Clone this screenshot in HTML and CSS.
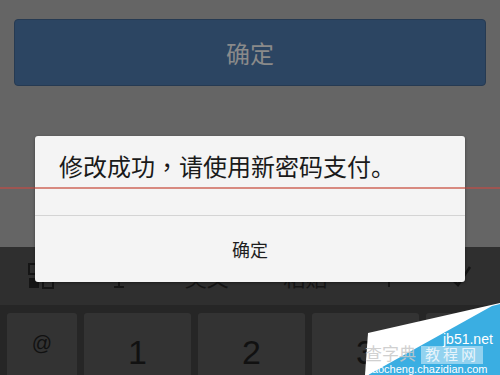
FILE: index.html
```html
<!DOCTYPE html>
<html lang="zh-CN">
<head>
<meta charset="utf-8">
<link rel="stylesheet" href="styles.css">
</head>
<body>
<div class="screen">
  <div class="top">
    <div class="primary-btn">确定</div>
  </div>
  <div class="toolbar">
    <span class="tool">
      <svg width="26" height="26" viewBox="0 0 26 26"><rect x="1" y="1" width="10" height="10" fill="none" stroke="#151515" stroke-width="2"/><rect x="1" y="15" width="10" height="10" fill="#151515"/><rect x="15" y="15" width="10" height="10" fill="none" stroke="#151515" stroke-width="2"/></svg>
    </span>
    <span class="tool">
      <svg width="22" height="26" viewBox="0 0 22 26"><path d="M2 4h18M11 4v20M6 24h10" stroke="#151515" stroke-width="2" fill="none"/></svg>
    </span>
    <span class="tool tool-text">英文</span>
    <span class="tool tool-text">粘贴</span>
    <span class="tool">
      <svg width="14" height="26" viewBox="0 0 14 26"><path d="M7 2v22M2 8l5-6 5 6" stroke="#151515" stroke-width="2" fill="none"/></svg>
    </span>
    <span class="tool">
      <svg width="22" height="26" viewBox="0 0 22 26"><path d="M2 16l6 6L20 4" stroke="#151515" stroke-width="2.5" fill="none"/></svg>
    </span>
  </div>
  <div class="keys">
    <div class="key key-small">@</div>
    <div class="key">1</div>
    <div class="key">2</div>
    <div class="key">3</div>
    <div class="key"></div>
  </div>

  <div class="red-line"></div>

  <div class="dialog">
    <div class="dialog-msg">修改成功<span class="punct" lang="zh-TW">，</span>请使用新密码支付。</div>
    <div class="dialog-line"></div>
    <div class="dialog-btn">确定</div>
  </div>

  <svg class="watermark" width="145" height="75" viewBox="0 0 145 75">
    <polygon points="13,33 145,3 145,75 10,75" fill="#ffffff"/>
    <polygon points="137,6 145,4 145,75 13,75" fill="#3aaee2"/>
    <text x="88" y="44" fill="#ffffff" font-family="Liberation Sans, sans-serif" font-size="14">jb51.net</text>
    <text x="10" y="60" fill="#c8c8c8" font-family="Noto Sans CJK SC, sans-serif" font-size="17" opacity="0.85">查字典</text>
    <rect x="66" y="46" width="62" height="18" fill="#ffffff" opacity="0.45"/>
    <text x="70" y="60" fill="#e8f4fb" font-family="Noto Sans CJK SC, sans-serif" font-size="15" letter-spacing="3">教程网</text>
    <text x="12" y="73" fill="#ffffff" font-family="Liberation Sans, sans-serif" font-size="11">jiaocheng.chazidian.com</text>
  </svg>
</div>
</body>
</html>
```
FILE: styles.css
```css
* { box-sizing: border-box; }
html, body { margin: 0; padding: 0; }
body {
  width: 500px;
  height: 375px;
  overflow: hidden;
  background: #656565;
  font-family: "Noto Sans CJK SC", "Liberation Sans", sans-serif;
}
.screen {
  position: relative;
  width: 500px;
  height: 375px;
  overflow: hidden;
}
.top {
  height: 247px;
  padding: 19px 14px 0 14px;
  background: #656565;
}
.primary-btn {
  height: 67px;
  border-radius: 4px;
  background: #2c4562;
  border: 1px solid #263a52;
  color: #8a8a8a;
  font-size: 24px;
  display: flex;
  align-items: center;
  justify-content: center;
}
.toolbar {
  background: #2f2f2f;
  display: flex;
  align-items: center;
  justify-content: space-between;
  padding: 0 28px 0 28px;
  border-bottom: 8px solid #262626;
  height: 66px;
}
.tool {
  display: flex;
  align-items: center;
  justify-content: center;
  color: #151515;
}
.tool-text {
  font-size: 22px;
}
.keys {
  height: 62px;
  background: #262626;
  display: flex;
  gap: 7px;
  padding-left: 7px;
}
.key {
  width: 107px;
  flex-shrink: 0;
  height: 80px;
  background: #333333;
  border-radius: 3px;
  color: #111111;
  font-family: "Liberation Sans", sans-serif;
  font-size: 34px;
  display: flex;
  justify-content: center;
  padding-top: 22px;
  line-height: 34px;
}
.key-small {
  width: 70px;
  font-size: 20px;
  padding-top: 20px;
  line-height: 20px;
}
.red-line {
  position: absolute;
  left: 0;
  top: 187px;
  width: 500px;
  height: 2px;
  background: #9e5551;
}
.dialog {
  position: absolute;
  left: 35px;
  top: 136px;
  width: 430px;
  height: 146px;
  background: #f4f4f4;
  border-radius: 3px;
  box-shadow: 0 1px 3px rgba(0,0,0,0.4);
  display: flex;
  flex-direction: column;
}
.dialog-msg {
  height: 79px;
  padding: 18px 0 0 24px;
  font-size: 24px;
  line-height: 24px;
  color: #1a1a1a;
  position: relative;
}
.punct {
  font-family: "Noto Sans CJK TC", sans-serif;
}
.dialog-msg::after {
  content: "";
  position: absolute;
  left: 0;
  right: 0;
  top: 51px;
  height: 2px;
  background: #d88a80;
}
.dialog-line {
  height: 1px;
  background: #d4d4d4;
}
.dialog-btn {
  flex: 1;
  display: flex;
  align-items: center;
  justify-content: center;
  font-size: 18px;
  color: #1e1e1e;
}
.watermark {
  position: absolute;
  left: 355px;
  top: 300px;
}
```
